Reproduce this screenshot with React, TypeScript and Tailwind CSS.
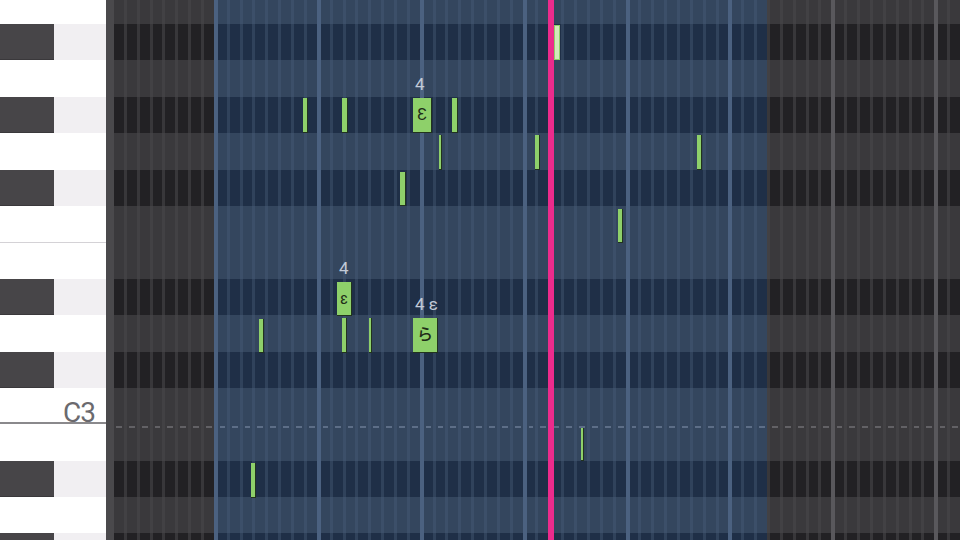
import React from 'react';

const ROWS = ['B3', 'A#3', 'A3', 'G#3', 'G3', 'F#3', 'F3', 'E3', 'D#3', 'D3', 'C#3', 'C3', 'B2', 'A#2', 'A2', 'G#2'];
const COLS = Array.from({ length: 66 }, (_, i) => i);

// cell look per (region, key colour, line kind)
const CELL = {
  grey: {
    white: {
      fine: 'bg-[#3a393c] border-l-[3px] border-[#424144]',
      beat: 'bg-[#3a393c] border-l-4 border-[#59585c]',
      edge: 'bg-[#3a393c] border-l-[3px] border-[#4a494c]',
    },
    black: {
      fine: 'bg-[#222124] border-l-[3px] border-[#38373a]',
      beat: 'bg-[#222124] border-l-4 border-[#59585c]',
      edge: 'bg-[#222124] border-l-[3px] border-[#4a494c]',
    },
  },
  blue: {
    white: {
      fine: 'bg-[#34465e] border-l-[3px] border-[#3c4f69]',
      beat: 'bg-[#34465e] border-l-4 border-[#4b6180]',
      edge: 'bg-[#34465e] border-l-[3px] border-[#4b6180]',
    },
    black: {
      fine: 'bg-[#1f2f47] border-l-[3px] border-[#30425b]',
      beat: 'bg-[#1f2f47] border-l-4 border-[#4b6180]',
      edge: 'bg-[#1f2f47] border-l-[3px] border-[#4b6180]',
    },
  },
};

const DASH = { grey: 'bg-[#626165]', blue: 'bg-[#5d6e87]' };

type Note = { x: number; y: number; w: number; h: number; glyph?: string; label?: string; active?: boolean };

const NOTES: Note[] = [
  { x: 554, y: 25, w: 6, h: 35, active: true },
  { x: 303, y: 98, w: 5, h: 35 },
  { x: 342, y: 98, w: 6, h: 35 },
  { x: 413, y: 98, w: 19, h: 35, glyph: 'Ɛ', label: '4' },
  { x: 452, y: 98, w: 6, h: 35 },
  { x: 439, y: 135, w: 3, h: 35 },
  { x: 535, y: 135, w: 5, h: 35 },
  { x: 697, y: 135, w: 5, h: 35 },
  { x: 400, y: 172, w: 6, h: 34 },
  { x: 618, y: 209, w: 5, h: 34 },
  { x: 337, y: 282, w: 15, h: 34, glyph: 'ɛ', label: '4' },
  { x: 259, y: 319, w: 5, h: 34 },
  { x: 342, y: 318, w: 5, h: 35 },
  { x: 369, y: 318, w: 3, h: 35 },
  { x: 413, y: 318, w: 25, h: 35, glyph: 'ら', label: '4 ε' },
  { x: 581, y: 428, w: 3, h: 33 },
  { x: 251, y: 463, w: 5, h: 35 },
];

const region = (c: number) => (c >= 8 && c <= 50 ? 'blue' : 'grey');

const KeyRow = ({ name }: { name: string }) => {
  const black = name.includes('#');
  if (black) {
    return (
      <div className="h-[36.4px] flex shrink-0">
        <div className="w-[54px] bg-[#474548] border-b border-[#3a383b]" />
        <div className="flex-1 bg-[#f1eff2]" />
      </div>
    );
  }
  if (name === 'C3') {
    return (
      <div className="h-[36.4px] shrink-0 bg-white border-b-2 border-[#8a898c] flex items-start justify-end pr-[11px] pt-[11px]">
        <span className="text-[28px] leading-none font-normal text-[#6b6a6e] tracking-[-1px]">C3</span>
      </div>
    );
  }
  return <div className={name === 'E3' ? 'h-[36.4px] shrink-0 bg-white border-t border-[#d4d2d6]' : 'h-[36.4px] shrink-0 bg-white'} />;
};

const GridRow = ({ name }: { name: string }) => {
  const key = name.includes('#') ? 'black' : 'white';
  return (
    <div className="h-[36.4px] shrink-0 grid grid-cols-[repeat(66,minmax(0,1fr))]">
      {COLS.map((c) => {
        const kind = c === 0 ? 'edge' : c % 8 === 0 ? 'beat' : 'fine';
        return (
          <div key={c} className={CELL[region(c)][key][kind]}>
            {name === 'B2' && <div className={`mt-[2px] mx-[2px] h-[2px] ${DASH[region(c)]}`} />}
          </div>
        );
      })}
    </div>
  );
};

export default function App() {
  return (
    <div className="relative w-[960px] h-[540px] overflow-hidden flex bg-[#232225] font-['Roboto','Noto_Sans_CJK_JP',sans-serif]">
      <div className="w-[106px] shrink-0 flex flex-col -mt-[12.4px]">
        {ROWS.map((r) => <KeyRow key={r} name={r} />)}
      </div>
      <div className="w-[5px] shrink-0 bg-[#4a494c]" />
      <div className="flex-1 flex flex-col -mt-[12.4px]">
        {ROWS.map((r) => <GridRow key={r} name={r} />)}
      </div>

      {NOTES.map((n, i) => (
        <div key={i} className="absolute" style={{ left: n.x, top: n.y, width: n.w, height: n.h }}>
          {n.label && (
            <span className="absolute left-[2px] -top-[22px] text-[17px] leading-none text-[#c2cad7] whitespace-nowrap">
              {n.label}
            </span>
          )}
          <div
            className={
              n.active
                ? 'w-full h-full bg-[#d3e8ba] border border-[#8fcf6a]'
                : 'w-full h-full bg-[#8ed06a] border-r border-b border-[#22331e] flex items-center justify-center'
            }
          >
            {n.glyph && <span className="text-[16px] leading-none font-medium text-[#1e2c18]">{n.glyph}</span>}
          </div>
        </div>
      ))}

      <div className="absolute left-[548px] top-0 w-[6px] h-[540px] bg-[#ec2b8c]" />
    </div>
  );
}
